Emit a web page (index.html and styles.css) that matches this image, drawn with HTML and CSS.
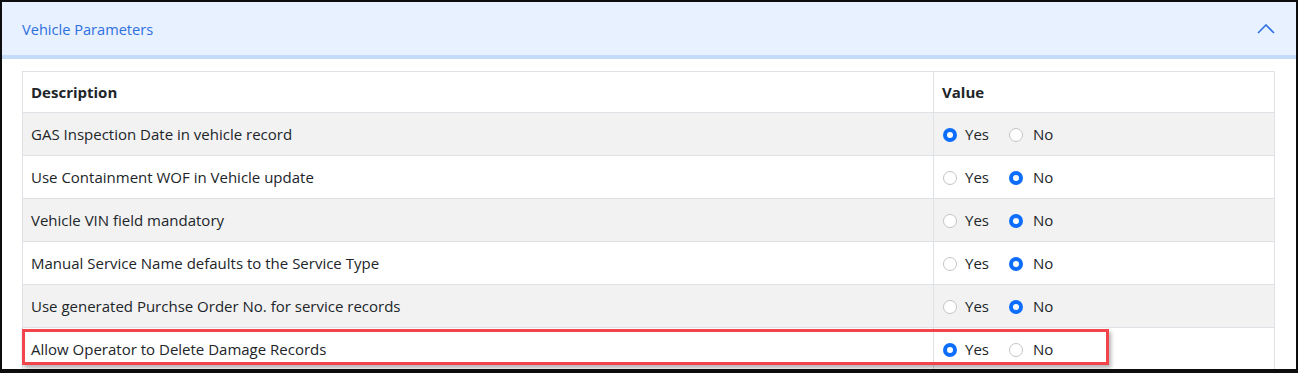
FILE: index.html
```html
<!DOCTYPE html>
<html lang="en">
<head>
  <meta charset="UTF-8"/>
  <meta name="viewport" content="width=device-width, initial-scale=1.0"/>
  <title>Vehicle Parameters</title>
  <link rel="stylesheet" href="styles.css">
</head>
<body>

<div class="frame">
  <div class="accordion-header">
    <span class="accordion-title">Vehicle Parameters</span>
    <svg class="chevron" width="18" height="10" viewBox="0 0 18 10">
      <polyline points="1,9 9,1 17,9" fill="none" stroke="#2f6fe0" stroke-width="1.6"/>
    </svg>
  </div>

  <div class="accordion-body">
    <div class="table-wrap">
      <table class="params">
        <thead>
          <tr>
            <th class="col-desc">Description</th>
            <th>Value</th>
          </tr>
        </thead>
        <tbody>
          <tr class="odd">
            <td>GAS Inspection Date in vehicle record</td>
            <td><span class="radio on"></span>Yes<span class="radio"></span>No</td>
          </tr>
          <tr>
            <td>Use Containment WOF in Vehicle update</td>
            <td><span class="radio"></span>Yes<span class="radio on"></span>No</td>
          </tr>
          <tr class="odd">
            <td>Vehicle VIN field mandatory</td>
            <td><span class="radio"></span>Yes<span class="radio on"></span>No</td>
          </tr>
          <tr>
            <td>Manual Service Name defaults to the Service Type</td>
            <td><span class="radio"></span>Yes<span class="radio on"></span>No</td>
          </tr>
          <tr class="odd">
            <td>Use generated Purchse Order No. for service records</td>
            <td><span class="radio"></span>Yes<span class="radio on"></span>No</td>
          </tr>
          <tr>
            <td>Allow Operator to Delete Damage Records</td>
            <td><span class="radio on"></span>Yes<span class="radio"></span>No</td>
          </tr>
        </tbody>
      </table>
      <div class="highlight"></div>
    </div>
  </div>
</div>

</body>
</html>
```

FILE: styles.css
```css
body {
  margin: 0;
  padding: 0;
  font-family: 'Open Sans', 'Noto Sans', sans-serif;
  background: #fff;
}

.frame {
  width: 1298px;
  height: 373px;
  box-sizing: border-box;
  border: 2px solid #0d0d0d;
  border-bottom-width: 4px;
  overflow: hidden;
  background: #fff;
}

.accordion-header {
  height: 53px;
  background: #e7f1ff;
  border-bottom: 4px solid #c5dcf9;
  display: flex;
  align-items: center;
  justify-content: space-between;
  padding: 0 21px 0 20px;
}

.accordion-title {
  color: #2f6fe0;
  font-size: 14.6px;
}

.accordion-body {
  padding: 12px 19px 0 20px;
}

.table-wrap {
  position: relative;
}

.params {
  width: 1253px;
  border-collapse: collapse;
  font-size: 15px;
  color: #212529;
}

.params th,
.params td {
  border: 1px solid #dee2e6;
  padding: 0 8px;
  height: 42px;
  text-align: left;
}

.params th {
  height: 40px;
  font-weight: bold;
}

.col-desc {
  width: 894px;
}

.params tr.odd td {
  background: #f2f2f2;
}

.radio {
  display: inline-block;
  width: 14px;
  height: 14px;
  box-sizing: border-box;
  border: 1px solid #c4c4c4;
  border-radius: 50%;
  background: #fff;
  vertical-align: -2px;
  margin: 0 8px 0 1px;
}

.radio ~ .radio {
  margin-left: 20px;
  margin-right: 10px;
}

.radio.on {
  border: 4px solid #0d6efd;
  background: #fff;
}

.highlight {
  position: absolute;
  left: 0;
  top: 258px;
  width: 1087px;
  height: 36px;
  box-sizing: border-box;
  border: 3px solid #f1444b;
  box-shadow: 2px 3px 4px rgba(0, 0, 0, 0.3);
}
```
